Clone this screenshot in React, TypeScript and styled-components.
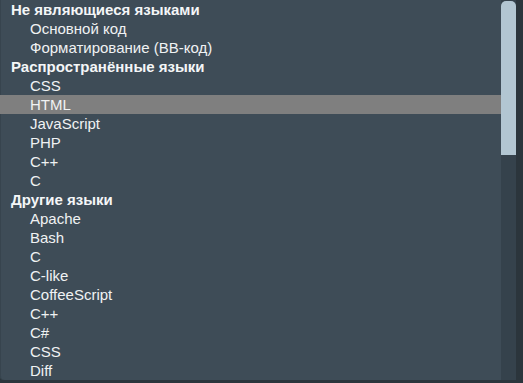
import React from 'react'
import styled, { createGlobalStyle } from 'styled-components'

const GlobalStyle = createGlobalStyle`
  html, body {
    margin: 0;
    padding: 0;
    background: #2b353c;
  }
  body {
    font-family: 'Liberation Sans', Arial, sans-serif;
  }
`

export const PageStyled = styled.div`
  width: 523px;
  height: 383px;
  display: flex;
  background: #2b353c;
  overflow: hidden;
`

export const ListBoxStyled = styled.div`
  width: 516px;
  height: 380px;
  display: flex;
  background: #3e4c57;
  border-bottom-left-radius: 4px;
  box-shadow: inset 1px 0 0 #37444e;
  overflow: hidden;
`

export const ListStyled = styled.div`
  flex: 1;
  display: flex;
  flex-direction: column;
`

export const GroupLabelStyled = styled.div`
  height: 19px;
  line-height: 19px;
  padding-left: 11px;
  font-size: 15px;
  font-weight: bold;
  color: #f4f6f7;
  white-space: nowrap;
`

export const OptionStyled = styled.div<{ $selected?: boolean }>`
  height: 19px;
  line-height: 19px;
  padding-left: 30px;
  font-size: 15px;
  color: #f0f2f3;
  white-space: nowrap;
  background: ${(p) => (p.$selected ? '#7f7f7f' : 'transparent')};
`

export const ScrollTrackStyled = styled.div`
  width: 15px;
  display: flex;
  flex-direction: column;
  background: #35424c;
  padding-top: 1px;
`

export const ScrollThumbStyled = styled.div`
  height: 154px;
  background: #b2c6d2;
  border-radius: 5px 5px 0 0;
`

const groups = [
  {
    label: 'Не являющиеся языками',
    options: ['Основной код', 'Форматирование (BB-код)'],
  },
  {
    label: 'Распространённые языки',
    options: ['CSS', 'HTML', 'JavaScript', 'PHP', 'C++', 'C'],
  },
  {
    label: 'Другие языки',
    options: ['Apache', 'Bash', 'C', 'C-like', 'CoffeeScript', 'C++', 'C#', 'CSS', 'Diff'],
  },
]

const App = () => {
  return (
    <PageStyled>
      <GlobalStyle />
      <ListBoxStyled>
        <ListStyled>
          {groups.map((g, gi) => (
            <React.Fragment key={gi}>
              <GroupLabelStyled>{g.label}</GroupLabelStyled>
              {g.options.map((o, oi) => (
                <OptionStyled key={oi} $selected={gi === 1 && o === 'HTML'}>
                  {o}
                </OptionStyled>
              ))}
            </React.Fragment>
          ))}
        </ListStyled>
        <ScrollTrackStyled>
          <ScrollThumbStyled />
        </ScrollTrackStyled>
      </ListBoxStyled>
    </PageStyled>
  )
}

export default App
